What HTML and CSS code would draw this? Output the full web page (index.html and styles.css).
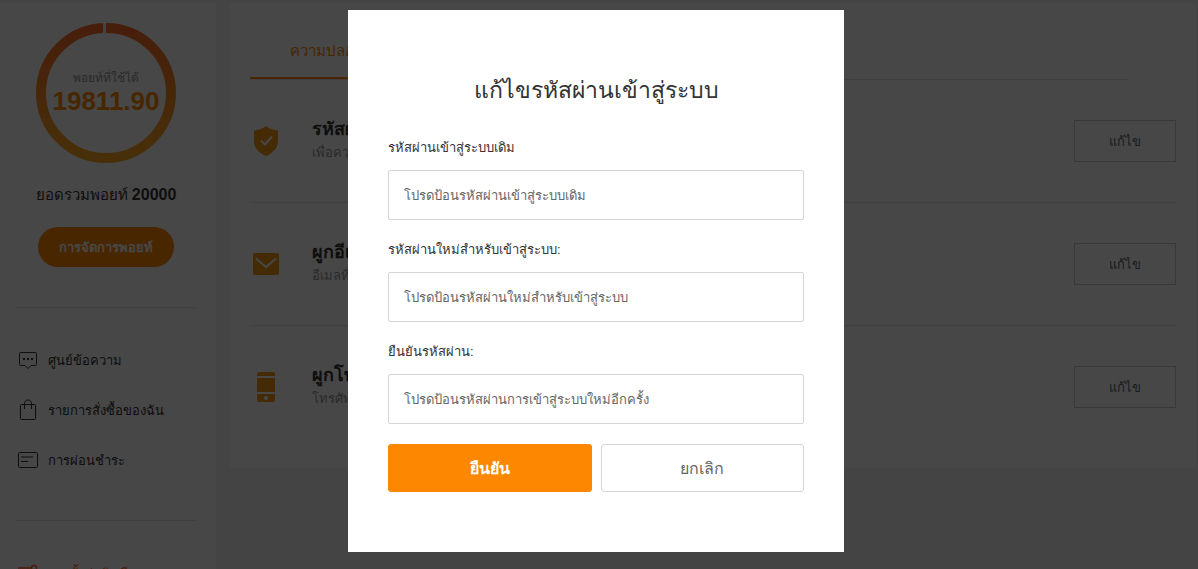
FILE: index.html
```html
<!DOCTYPE html>
<html lang="th">
<head>
    <meta charset="UTF-8">
    <meta name="viewport" content="width=device-width, initial-scale=1.0">
    <title>แก้ไขรหัสผ่านเข้าสู่ระบบ</title>
    <link rel="stylesheet" href="styles.css">
</head>
<body>
    <div class="page">
        <aside class="sidebar">
            <div class="points">
                <div class="ring">
                    <svg class="ring-svg" viewBox="0 0 140 140" aria-hidden="true">
                        <defs>
                            <linearGradient id="ringColor" gradientUnits="userSpaceOnUse" x1="0" y1="0" x2="0" y2="140">
                                <stop offset="0" stop-color="#ff6a2a"/>
                                <stop offset="1" stop-color="#ffae22"/>
                            </linearGradient>
                        </defs>
                        <circle cx="70" cy="70" r="65" fill="none" stroke="url(#ringColor)" stroke-width="10"/>
                        <rect x="67" y="0" width="3" height="11" fill="#f0f0f0"/>
                    </svg>
                    <span class="ring-label">พอยท์ที่ใช้ได้</span>
                    <strong class="ring-value">19811.90</strong>
                </div>
                <p class="total">ยอดรวมพอยท์ <strong>20000</strong></p>
                <button type="button" class="points-btn">การจัดการพอยท์</button>
            </div>
            <nav class="menu">
                <a href="#messages">
                    <svg width="20" height="20" viewBox="0 0 20 20" fill="none" stroke="currentColor" aria-hidden="true">
                        <path d="M2.500 2.500h15a1 1 0 0 1 1 1v11a1 1 0 0 1-1 1H13L10 18.500 7 15.500H2.500a1 1 0 0 1-1-1v-11a1 1 0 0 1 1-1z"/>
                        <path d="M5 9h2M9 9h2M13 9h2" stroke-width="2"/>
                    </svg>
                    ศูนย์ข้อความ
                </a>
                <a href="#orders">
                    <svg width="20" height="22" viewBox="0 0 20 22" fill="none" stroke="currentColor" aria-hidden="true">
                        <rect x="2.500" y="5.500" width="15" height="15" rx="1"/>
                        <path d="M6.500 10V4.500C6.500 2.500 8 1 10 1s3.500 1.500 3.500 3.500V10"/>
                    </svg>
                    รายการสั่งซื้อของฉัน
                </a>
                <a href="#installment">
                    <svg width="20" height="20" viewBox="0 0 20 20" fill="none" stroke="currentColor" aria-hidden="true">
                        <rect x="0.500" y="2.500" width="19" height="15" rx="1"/>
                        <path d="M3 7h12M3 11.500h7"/>
                    </svg>
                    การผ่อนชำระ
                </a>
            </nav>
            <nav class="menu">
                <a href="#settings" class="active">
                    <svg width="20" height="20" viewBox="0 0 20 20" fill="none" stroke="currentColor" stroke-width="1.500" aria-hidden="true">
                        <path d="M0 5h13M0 15h3M8 15h12"/>
                        <circle cx="16" cy="5" r="2.500"/>
                        <circle cx="5.500" cy="15" r="2.500"/>
                    </svg>
                    การตั้งค่าบัญชี
                </a>
            </nav>
        </aside>

        <main class="content">
            <div class="tabs">
                <a href="#security" class="tab">ความปลอดภัย</a>
            </div>
            <ul class="settings">
                <li class="setting">
                    <svg class="setting-icon" width="32" height="32" viewBox="0 0 32 32" aria-hidden="true">
                        <path d="M16 1C12 4 8 5 4 5.500V16c0 7 5 12 12 15 7-3 12-8 12-15V5.500C24 5 20 4 16 1z" fill="#f59b17"/>
                        <path d="M11 15.500l4 4 7-8" fill="none" stroke="#fff" stroke-width="2"/>
                    </svg>
                    <div class="setting-text">
                        <h2>รหัสผ่านเข้าสู่ระบบ</h2>
                        <p>เพื่อความปลอดภัยของบัญชี</p>
                    </div>
                    <button type="button" class="edit-btn">แก้ไข</button>
                </li>
                <li class="setting">
                    <svg class="setting-icon" width="32" height="32" viewBox="0 0 32 32" aria-hidden="true">
                        <rect x="3" y="5" width="26" height="22" rx="2" fill="#f59b17"/>
                        <path d="M6 10.500l10 8.500 10-8.500" fill="none" stroke="#fff" stroke-width="2"/>
                    </svg>
                    <div class="setting-text">
                        <h2>ผูกอีเมล</h2>
                        <p>อีเมลที่ผูกไว้</p>
                    </div>
                    <button type="button" class="edit-btn">แก้ไข</button>
                </li>
                <li class="setting">
                    <svg class="setting-icon" width="32" height="32" viewBox="0 0 32 32" aria-hidden="true">
                        <path d="M9 1h14a2 2 0 0 1 2 2v2H7V3a2 2 0 0 1 2-2zM7 7h18v14H7zM7 23h18v6a2 2 0 0 1-2 2H9a2 2 0 0 1-2-2z" fill="#f59b17"/>
                        <circle cx="16" cy="27" r="2" fill="#fff"/>
                    </svg>
                    <div class="setting-text">
                        <h2>ผูกโทรศัพท์</h2>
                        <p>โทรศัพท์ที่ผูกไว้</p>
                    </div>
                    <button type="button" class="edit-btn">แก้ไข</button>
                </li>
            </ul>
        </main>
    </div>

    <div class="overlay">
        <form class="modal" role="dialog" aria-labelledby="modalTitle">
            <h1 id="modalTitle">แก้ไขรหัสผ่านเข้าสู่ระบบ</h1>
            <div class="form-group">
                <label for="oldPassword">รหัสผ่านเข้าสู่ระบบเดิม</label>
                <input type="password" id="oldPassword" placeholder="โปรดป้อนรหัสผ่านเข้าสู่ระบบเดิม">
            </div>
            <div class="form-group">
                <label for="newPassword">รหัสผ่านใหม่สำหรับเข้าสู่ระบบ:</label>
                <input type="password" id="newPassword" placeholder="โปรดป้อนรหัสผ่านใหม่สำหรับเข้าสู่ระบบ">
            </div>
            <div class="form-group">
                <label for="confirmPassword">ยืนยันรหัสผ่าน:</label>
                <input type="password" id="confirmPassword" placeholder="โปรดป้อนรหัสผ่านการเข้าสู่ระบบใหม่อีกครั้ง">
            </div>
            <div class="actions">
                <button type="submit" class="btn btn-primary">ยืนยัน</button>
                <button type="button" class="btn">ยกเลิก</button>
            </div>
        </form>
    </div>
</body>
</html>
```
FILE: styles.css
```css
* {
    box-sizing: border-box;
}
body, html {
    margin: 0;
    padding: 0;
    height: 100%;
    overflow: hidden;
    background-color: #f4f4f4;
    font-family: "Liberation Sans", Arial, sans-serif;
    font-size: 13px;
    color: #333;
}
button, input {
    font-family: inherit;
}
h1, h2, p, ul {
    margin: 0;
    padding: 0;
}
a {
    color: inherit;
    text-decoration: none;
}
.page {
    display: flex;
    align-items: flex-start;
    gap: 14px;
    padding: 3px 2px 0 0;
}

/* sidebar */
.sidebar {
    flex: 0 0 216px;
    padding: 20px 20px 20px 16px;
    background-color: #fff;
}
.points {
    display: flex;
    flex-direction: column;
    align-items: center;
    padding-bottom: 40px;
}
.ring {
    display: grid;
    width: 140px;
    height: 140px;
    align-content: center;
    justify-items: center;
    position: relative;
}
.ring-svg {
    position: absolute;
    inset: 0;
}
.ring-label {
    font-size: 12px;
    line-height: 16px;
    color: #999;
}
.ring-value {
    font-size: 26px;
    line-height: 30px;
    color: #fd8800;
}
.total {
    margin: 20px 0;
    font-size: 15px;
    line-height: 24px;
    white-space: nowrap;
}
.total strong {
    font-size: 16px;
}
.points-btn {
    min-width: 136px;
    height: 40px;
    padding: 0 20px;
    border: none;
    border-radius: 20px;
    background-color: #fd8800;
    color: #fff;
    font-size: 13px;
    font-weight: bold;
    white-space: nowrap;
    cursor: pointer;
}
.menu {
    padding: 27px 0 35px;
    border-top: 1px solid #e6e6e6;
}
.menu a {
    display: flex;
    align-items: center;
    gap: 10px;
    height: 50px;
    padding-left: 2px;
    white-space: nowrap;
}
.menu .active {
    color: #ff6a2a;
}

/* account settings */
.content {
    flex: 1;
    padding: 20px 20px 19px;
    background-color: #fff;
}
.tabs {
    display: flex;
    margin-right: 48px;
    border-bottom: 1px solid #e6e6e6;
}
.tab {
    height: 56px;
    padding: 0 40px;
    border-bottom: 2px solid #fd8800;
    color: #fd8800;
    font-size: 15px;
    line-height: 56px;
}
.settings {
    list-style: none;
}
.setting {
    display: flex;
    align-items: center;
    height: 123px;
    border-bottom: 1px solid #e6e6e6;
}
.setting:last-child {
    border-bottom-color: transparent;
}
.setting-text {
    flex: 1;
    padding-left: 30px;
}
.setting-text h2 {
    font-size: 18px;
    line-height: 24px;
}
.setting-text p {
    line-height: 24px;
    color: #999;
}
.edit-btn {
    width: 102px;
    height: 42px;
    border: 1px solid #ccc;
    background-color: #fff;
    color: #666;
    font-size: 13px;
    cursor: pointer;
}

/* password dialog */
.overlay {
    position: fixed;
    inset: 0;
    display: flex;
    justify-content: center;
    align-items: flex-start;
    padding: 10px 6px 10px 0;
    background-color: rgba(0, 0, 0, 0.72);
}
.modal {
    width: 100%;
    max-width: 496px;
    padding: 60px 40px;
    background-color: #fff;
}
.modal h1 {
    margin-bottom: 28px;
    font-size: 23px;
    font-weight: normal;
    line-height: 40px;
    text-align: center;
}
.form-group {
    margin-bottom: 20px;
}
.form-group label {
    display: block;
    margin-bottom: 12px;
    line-height: 20px;
}
.form-group input {
    display: block;
    width: 100%;
    height: 50px;
    padding: 0 15px;
    border: 1px solid #d5d5d5;
    border-radius: 2px;
    font-size: 13px;
}
.form-group input::placeholder {
    color: #666;
}
.actions {
    display: flex;
    gap: 9px;
}
.btn {
    flex: 1;
    height: 48px;
    border: 1px solid #d5d5d5;
    border-radius: 3px;
    background-color: #fff;
    color: #666;
    font-size: 16px;
    cursor: pointer;
}
.btn-primary {
    border-color: #fd8800;
    background-color: #fd8800;
    color: #fff;
    font-weight: bold;
}
```
